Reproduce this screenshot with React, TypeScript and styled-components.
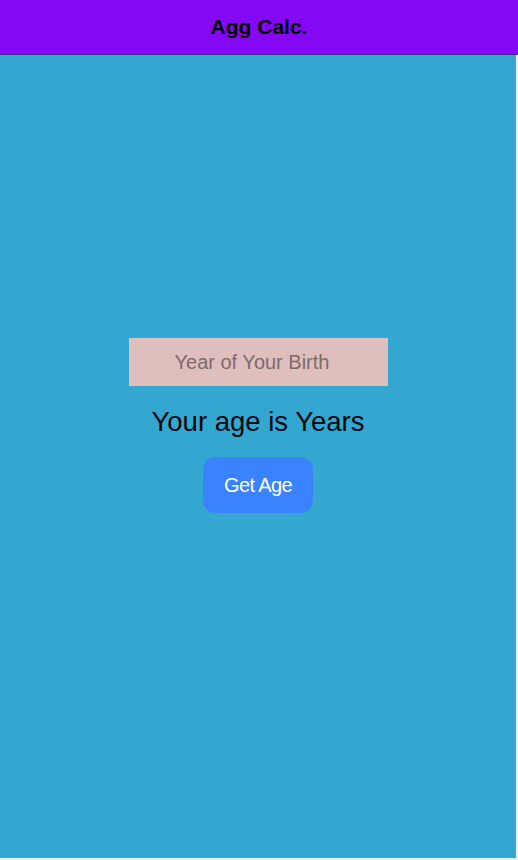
import React from "react";
import styled, { createGlobalStyle } from "styled-components";

const Global = createGlobalStyle`
  html, body { margin: 0; padding: 0; background: #eeeeee; }
  body { font-family: Arial, "Liberation Sans", Helvetica, sans-serif; }
  * { box-sizing: border-box; }
`;

const Page = styled.div`
  width: 518px;
  display: flex;
  flex-direction: column;
`;

const Header = styled.header`
  height: 55px;
  background: #8508f4;
  border-bottom: 1px solid #4a2a80;
  display: flex;
  align-items: center;
  justify-content: center;
`;

const Title = styled.h1`
  margin: 0;
  font-size: 21px;
  font-weight: 700;
  color: #000;
`;

const Main = styled.main`
  height: 803px;
  width: 516px;
  background: #33a7cf;
  display: flex;
  flex-direction: column;
  align-items: center;
  padding-top: 283px;
`;

const Input = styled.input`
  width: 259px;
  height: 48px;
  border: none;
  outline: none;
  background: #dfbebe;
  font-family: Arial, "Liberation Sans", sans-serif;
  font-size: 20px;
  color: #333;
  text-align: center;
  padding: 0 12px 0 0;
  &::placeholder { color: #7d6a6a; }
`;

const Result = styled.h2`
  margin: 19px 0 0;
  font-size: 27.5px;
  font-weight: 400;
  line-height: 34px;
  color: #050a10;
`;

const Button = styled.button`
  margin-top: 18px;
  width: 110px;
  height: 56px;
  border: none;
  border-radius: 13px;
  background: #3a82ff;
  color: #fff;
  font-family: Arial, "Liberation Sans", sans-serif;
  font-size: 20px;
  letter-spacing: -0.6px;
  cursor: pointer;
`;

export default function App() {
  return (
    <Page>
      <Global />
      <Header>
        <Title>Agg Calc.</Title>
      </Header>
      <Main>
        <Input placeholder="Year of Your Birth" />
        <Result>Your age is Years</Result>
        <Button>Get Age</Button>
      </Main>
    </Page>
  );
}
